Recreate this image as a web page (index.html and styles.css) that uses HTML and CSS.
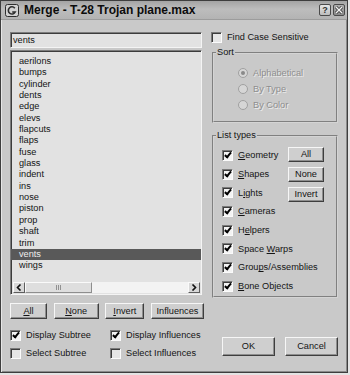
FILE: index.html
```html
<!DOCTYPE html>
<html lang="en">
<head>
    <meta charset="UTF-8">
    <title>Merge - T-28 Trojan plane.max</title>
    <link rel="stylesheet" href="styles.css">
</head>
<body>

<div class="window">
    <div class="titlebar">
        <svg class="app-icon" width="14" height="13" viewBox="0 0 14 13">
            <rect x="0.5" y="0.5" width="13" height="12" rx="2" fill="#d2d2d2" stroke="#2e2e2e"/>
            <path d="M9.8 4.2 A3.6 3.6 0 1 0 10.2 8 L7.2 8" fill="none" stroke="#2e2e2e" stroke-width="1.6"/>
        </svg>
        <span class="title">Merge - T-28 Trojan plane.max</span>
        <span class="tb-btn help">?</span>
        <span class="tb-btn close">
            <svg width="10" height="10" viewBox="0 0 10 10">
                <path d="M2 2 L8 8 M8 2 L2 8" stroke="#3a3a3a" stroke-width="3"/>
                <path d="M2 2 L8 8 M8 2 L2 8" stroke="#f4f4f4" stroke-width="1.4"/>
            </svg>
        </span>
    </div>

    <div class="dialog">
        <div class="left">
            <div class="textbox">vents</div>

            <div class="listbox">
                <div class="items">
                    <div class="item">aerilons</div>
                    <div class="item">bumps</div>
                    <div class="item">cylinder</div>
                    <div class="item">dents</div>
                    <div class="item">edge</div>
                    <div class="item">elevs</div>
                    <div class="item">flapcuts</div>
                    <div class="item">flaps</div>
                    <div class="item">fuse</div>
                    <div class="item">glass</div>
                    <div class="item">indent</div>
                    <div class="item">ins</div>
                    <div class="item">nose</div>
                    <div class="item">piston</div>
                    <div class="item">prop</div>
                    <div class="item">shaft</div>
                    <div class="item">trim</div>
                    <div class="item sel">vents</div>
                    <div class="item">wings</div>
                </div>
                <div class="list-foot">
                    <div class="foot-arrow">
                        <svg width="6" height="7" viewBox="0 0 6 7"><path d="M4.5 0.5 L1.5 3.5 L4.5 6.5" fill="none" stroke="#111" stroke-width="1.6"/></svg>
                    </div>
                    <div class="foot-track"><div class="foot-thumb"><div class="grip"></div></div></div>
                    <div class="foot-arrow">
                        <svg width="6" height="7" viewBox="0 0 6 7"><path d="M1.5 0.5 L4.5 3.5 L1.5 6.5" fill="none" stroke="#111" stroke-width="1.6"/></svg>
                    </div>
                </div>
            </div>

            <div class="btn-row">
                <span class="btn w-all"><u>A</u>ll</span>
                <span class="btn w-none"><u>N</u>one</span>
                <span class="btn w-invert"><u>I</u>nvert</span>
                <span class="btn w-infl">Influences</span>
            </div>

            <div class="opts">
                <label class="check"><span class="cb on"></span>Display Subtree</label>
                <label class="check"><span class="cb on"></span>Display Influences</label>
                <label class="check"><span class="cb"></span>Select Subtree</label>
                <label class="check"><span class="cb"></span>Select Influences</label>
            </div>
        </div>

        <div class="right">
            <label class="check find"><span class="cb"></span>Find Case Sensitive</label>

            <fieldset class="group sort">
                <legend>Sort</legend>
                <div class="radios">
                    <div class="radio-row"><span class="radio on"></span>Alphabetical</div>
                    <div class="radio-row"><span class="radio"></span>By Type</div>
                    <div class="radio-row"><span class="radio"></span>By Color</div>
                </div>
            </fieldset>

            <fieldset class="group types">
                <legend>List types</legend>
                <div class="types-body">
                    <div class="type-list">
                        <label class="check"><span class="cb on"></span><span><u>G</u>eometry</span></label>
                        <label class="check"><span class="cb on"></span><span><u>S</u>hapes</span></label>
                        <label class="check"><span class="cb on"></span><span>L<u>i</u>ghts</span></label>
                        <label class="check"><span class="cb on"></span><span><u>C</u>ameras</span></label>
                        <label class="check"><span class="cb on"></span><span>H<u>e</u>lpers</span></label>
                        <label class="check"><span class="cb on"></span><span>Space <u>W</u>arps</span></label>
                        <label class="check"><span class="cb on"></span><span>Grou<u>p</u>s/Assemblies</span></label>
                        <label class="check"><span class="cb on"></span><span><u>B</u>one Objects</span></label>
                    </div>
                    <div class="type-btns">
                        <span class="btn small">All</span>
                        <span class="btn small">None</span>
                        <span class="btn small">Invert</span>
                    </div>
                </div>
            </fieldset>

            <div class="dlg-btns">
                <span class="btn big">OK</span>
                <span class="btn big">Cancel</span>
            </div>
        </div>
    </div>
</div>

</body>
</html>
```

FILE: styles.css
```css
html {
    background: #e4e4e4;
}
body {
    margin: 0;
    font-family: "Liberation Sans", Arial, sans-serif;
    font-size: 9.2px;
    color: #141414;
}
.window {
    width: 348px;
    height: 373px;
    box-sizing: border-box;
    background: #c9c9c9;
    border: 1px solid #3e3e3e;
    box-shadow: inset 1px 1px #e6e6e6, inset -1px -1px #8a8a8a;
}

/* title bar */
.titlebar {
    display: flex;
    align-items: center;
    height: 18px;
    padding: 0 2px 0 4px;
    border-bottom: 1px solid #9c9c9c;
    background: linear-gradient(#a4a4a4, #bdbdbd 45%, #b3b3b3);
}
.app-icon {
    flex: none;
}
.title {
    margin-left: 5px;
    font-size: 12px;
    font-weight: bold;
    color: #0c0c0c;
}
.tb-btn {
    width: 12px;
    height: 12px;
    box-sizing: border-box;
    border: 1px solid #4a4a4a;
    border-radius: 2px;
    display: flex;
    align-items: center;
    justify-content: center;
}
.help {
    margin-left: auto;
    background: linear-gradient(#e6e6e6, #bdbdbd);
    font-size: 9px;
    font-weight: bold;
    color: #333;
}
.close {
    margin-left: 2px;
    background: linear-gradient(#b0b0b0, #8a8a8a);
}

/* body */
.dialog {
    display: flex;
    padding-left: 9px;
}
.left {
    width: 195px;
    padding-top: 12px;
}
.textbox {
    width: 192px;
    height: 16px;
    box-sizing: border-box;
    padding-left: 2px;
    line-height: 14px;
    background: #e2e2e2;
    border: 1px solid;
    border-color: #7c7c7c #f4f4f4 #f4f4f4 #7c7c7c;
    box-shadow: inset 1px 1px #3c3c3c;
}
.listbox {
    margin-top: 2px;
    width: 192px;
    height: 245px;
    box-sizing: border-box;
    display: flex;
    flex-direction: column;
    background: #e2e2e2;
    border: 1px solid;
    border-color: #7c7c7c #f4f4f4 #f4f4f4 #7c7c7c;
    box-shadow: inset 1px 1px #3c3c3c;
}
.items {
    flex: 1;
    padding-top: 5px;
}
.item {
    height: 11.35px;
    line-height: 11.35px;
    padding-left: 8px;
}
.item.sel {
    background: #595959;
    color: #eeeeee;
}
.list-foot {
    flex: none;
    display: flex;
    height: 11px;
    margin: 0 1px 1px 2px;
}
.foot-arrow {
    flex: none;
    width: 12px;
    height: 11px;
    box-sizing: border-box;
    display: flex;
    align-items: center;
    justify-content: center;
    background: #d8d8d8;
    border: 1px solid;
    border-color: #fafafa #5e5e5e #5e5e5e #fafafa;
}
.foot-track {
    flex: 1;
    height: 11px;
    background: #f3f3f3;
}
.foot-thumb {
    width: 67px;
    height: 11px;
    box-sizing: border-box;
    display: flex;
    align-items: center;
    justify-content: center;
    background: #dedede;
    border: 1px solid;
    border-color: #fafafa #8e8e8e #8e8e8e #fafafa;
}
.grip {
    width: 5px;
    height: 5px;
    background: repeating-linear-gradient(90deg, #929292 0 1px, transparent 1px 2px);
}

/* buttons */
.btn {
    display: inline-block;
    height: 16px;
    box-sizing: border-box;
    text-align: center;
    line-height: 14px;
    background: #cfcfcf;
    border: 1px solid;
    border-color: #f6f6f6 #3e3e3e #3e3e3e #f6f6f6;
    box-shadow: inset -1px -1px #8e8e8e;
}
.btn-row {
    display: flex;
    justify-content: space-between;
    width: 194px;
    margin-top: 8px;
}
.w-all { width: 37px; }
.w-none { width: 45px; }
.w-invert { width: 39px; }
.w-infl { width: 53px; }

/* checkboxes */
.opts {
    display: grid;
    grid-template-columns: 100px auto;
    grid-auto-rows: 18px;
    margin-top: 7px;
}
.check {
    display: flex;
    align-items: center;
    gap: 5px;
    white-space: nowrap;
}
.cb {
    flex: none;
    position: relative;
    width: 11px;
    height: 11px;
    box-sizing: border-box;
    background: #e6e6e6;
    border: 1px solid;
    border-color: #7a7a7a #fbfbfb #fbfbfb #7a7a7a;
    box-shadow: inset 1px 1px #3c3c3c;
}
.cb.on {
    background: #f4f4f4;
}
.cb.on::after {
    content: "";
    position: absolute;
    left: 3px;
    top: 0;
    width: 2px;
    height: 5px;
    border: solid #000;
    border-width: 0 2px 2px 0;
    transform: rotate(40deg);
}

/* right column */
.right {
    width: 127px;
    margin-left: 6px;
    padding-top: 11px;
}
.find {
    height: 12px;
}
.group {
    margin: 0 0 0 1px;
    min-width: 0;
    border: 2px groove #d4d4d4;
    padding: 0 0 0 2px;
}
.group legend {
    padding: 0 1px;
    line-height: 11px;
}
.sort {
    margin-top: 4px;
    padding-top: 7px;
    padding-bottom: 8px;
}
.radios {
    padding-left: 22px;
}
.radio-row {
    display: flex;
    align-items: center;
    gap: 5px;
    height: 16px;
    color: #8e8e8e;
    text-shadow: 1px 1px #ececec;
}
.radio {
    width: 10px;
    height: 10px;
    box-sizing: border-box;
    border-radius: 50%;
    border: 1px solid #a0a0a0;
    background: #d6d6d6;
    display: flex;
    align-items: center;
    justify-content: center;
}
.radio.on::after {
    content: "";
    width: 4px;
    height: 4px;
    border-radius: 50%;
    background: #8a8a8a;
}
.types {
    margin-top: 7px;
    padding-top: 5px;
    padding-bottom: 0;
}
.types-body {
    display: grid;
    grid-template-columns: 72px 36px;
    align-items: start;
}
.type-list {
    padding-left: 6px;
    min-width: 0;
}
.type-list .check {
    height: 18.7px;
}
.type-btns {
    display: flex;
    flex-direction: column;
    gap: 5px;
    margin-top: 1px;
}
.btn.small {
    width: 36px;
    height: 15px;
    line-height: 13px;
}
.dlg-btns {
    display: flex;
    gap: 10px;
    margin-top: 39px;
    padding-left: 11px;
}
.btn.big {
    width: 54px;
    height: 19px;
    line-height: 17px;
}
```
